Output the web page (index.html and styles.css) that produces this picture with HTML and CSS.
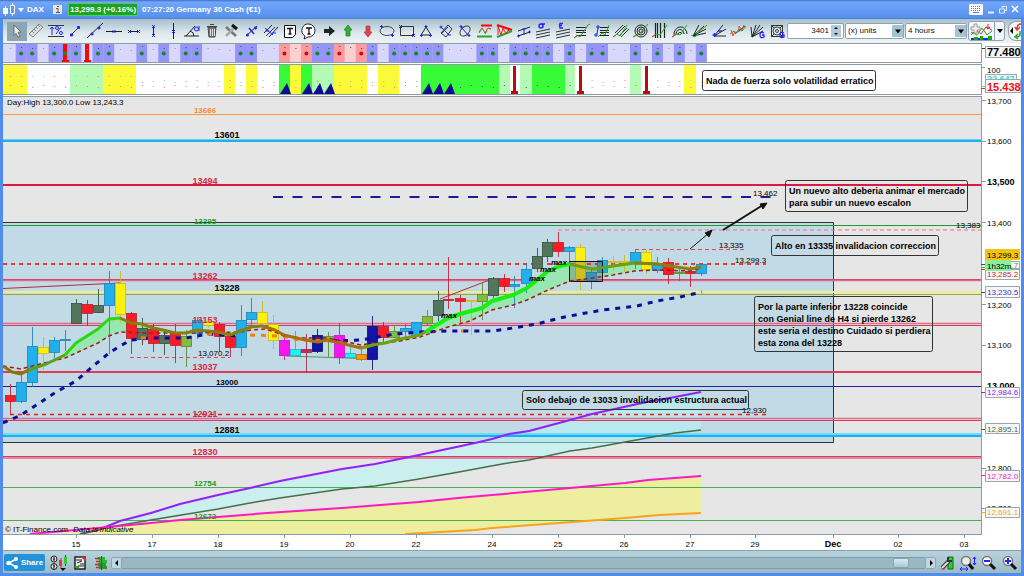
FILE: index.html
```html
<!DOCTYPE html>
<html lang="es">
<head>
<meta charset="utf-8">
<title>DAX - Germany 30 Cash</title>
<link rel="stylesheet" href="styles.css">
</head>
<body>
<div class="window">
<header class="titlebar">
  <svg class="logo" viewBox="0 0 12 14"><path d="M2.500 3v10M9.500 0v13" stroke="#fff"/><path d="M0 5h5v6H0z" fill="#fff"/><path d="M7.500 2.500h4v8h-4z" fill="#5b95ee" stroke="#fff"/></svg>
  <svg class="caret" viewBox="0 0 6 4"><path d="M0 0h6L3 4z" fill="#fff"/></svg>
  <span class="symbol">DAX</span>
  <svg class="info" viewBox="0 0 9 9"><path d="M0 0h9v9H0z" fill="#e6e6e6"/><path d="M3 3.500h2V7M3 7.500h4M4 1.500h2" stroke="#555" fill="none"/></svg>
  <strong class="quote">13,299.3 (+0.16%)</strong>
  <span class="name">07:27:20 Germany 30 Cash (€1)</span>
  <div class="winbtns">
    <button aria-label="Keyboard"><svg width="14" height="11" viewBox="0 0 14 11"><rect width="14" height="11" rx="1" fill="#fff"/><path d="M2 2.500h10M2 4.500h10M2 6.500h10" stroke="#4a80d8" stroke-dasharray="1 1"/><path d="M4 8.500h6" stroke="#4a80d8"/></svg></button>
    <button aria-label="Minimize"><svg width="8" height="9" viewBox="0 0 8 9"><path d="M1 7.500h6" stroke="#e8f0ff" stroke-width="2"/></svg></button>
    <button aria-label="Restore"><svg width="8" height="9" viewBox="0 0 8 9" fill="none" stroke="#e8f0ff"><path d="M3 3V1.500h4.500v4H6M.5 4h5v4h-5z"/></svg></button>
    <button aria-label="Close"><svg width="8" height="9" viewBox="0 0 8 9"><path d="M1 1l6 6M7 1L1 7" stroke="#fff" stroke-width="1.500"/></svg></button>
  </div>
</header>

<div class="toolbar">
  <div class="tools">
    <button class="on" aria-label="Select"><svg viewBox="0 0 18 18"><path d="M6 3l7 7-3 .3 2 4-2 1-2-4-2 2z" fill="#eee" stroke="#555" stroke-width=".8"/></svg></button>
    <button aria-label="Ruler"><svg viewBox="0 0 18 18"><path d="M2 12L12 2l4 3L6 15z" fill="#ddd" stroke="#888"/><path d="M5 9l2 2M7 7l2 2M9 5l2 2M11 3l2 2" stroke="#888"/></svg></button>
    <button aria-label="Percent range"><svg viewBox="0 0 18 18"><path d="M1 3.500h16M1 14.500h16" stroke="#333"/><path d="M5 5v8M3 7l2-2 2 2" stroke="#22f" fill="none"/><path d="M9 12l5-7" stroke="#22f"/><circle cx="10" cy="6" r="1.500" fill="none" stroke="#22f"/><circle cx="14" cy="11" r="1.500" fill="none" stroke="#22f"/></svg></button>
    <button aria-label="Segment"><svg viewBox="0 0 18 18"><path d="M5 13l8-8" stroke="#333"/><path d="M4 13h3M5.500 11.500v3M11 5.500h3M12.500 4v3" stroke="#22f" stroke-width="2"/></svg></button>
    <button aria-label="Line"><svg viewBox="0 0 18 18"><path d="M1 16L17 1" stroke="#222"/><path d="M4.500 12h3M6 10.500v3M11.500 6h3M13 4.500v3" stroke="#22f" stroke-width="1.500"/></svg></button>
    <button aria-label="Horizontal line"><svg viewBox="0 0 18 18"><path d="M1 9.500h16" stroke="#222"/><path d="M7.500 8l3 3M10.500 8l-3 3" stroke="#22f"/></svg></button>
    <button aria-label="Horizontal segment"><svg viewBox="0 0 18 18"><path d="M4 9.500h10" stroke="#222"/><path d="M3 8l3 3M6 8l-3 3M12 8l3 3M15 8l-3 3" stroke="#22f"/></svg></button>
    <button aria-label="Vertical segment"><svg viewBox="0 0 18 18"><path d="M9.500 4v10" stroke="#222"/><path d="M8 3l3 3M11 3L8 6M8 12l3 3M11 12l-3 3" stroke="#22f"/></svg></button>
    <button aria-label="Vertical line"><svg viewBox="0 0 18 18"><path d="M9.500 1v16" stroke="#222"/><path d="M8 8l3 3M11 8l-3 3" stroke="#22f"/></svg></button>
    <button aria-label="Angle"><svg viewBox="0 0 18 18"><path d="M1 14h15M3 14L12 4M7 9q4 1 4 5" stroke="#222" fill="none"/><circle cx="13.500" cy="7" r="2" fill="none" stroke="#22f"/><path d="M16 4v5" stroke="#22f"/></svg></button>
    <button aria-label="Delete"><svg viewBox="0 0 18 18"><path d="M5 5h8l-1 10H6z" fill="#777" stroke="#444"/><path d="M7.500 7v7M9.500 7v7M11.500 7v7" stroke="#ddd"/><path d="M4 4.500h10M7 2.500h4" stroke="#444"/></svg></button>
    <button aria-label="Tools"><svg viewBox="0 0 18 18"><path d="M4 5l10 9" stroke="#777" stroke-width="2.500"/><path d="M4 14l8-8" stroke="#aaa" stroke-width="2.500"/><path d="M10 3l5 4" stroke="#111" stroke-width="3"/></svg></button>
    <button aria-label="Edit line"><svg viewBox="0 0 18 18"><path d="M4 14L15 4" stroke="#222"/><path d="M4 13h3M5.500 11.500v3M12 6h3M13.500 4.500v3M7 6l5 6" stroke="#22f" stroke-width="1.500"/></svg></button>
    <button aria-label="Parallels"><svg viewBox="0 0 18 18"><path d="M3 11l8-8M8 15l9-10" stroke="#222"/><path d="M4 6l8 7M5 14l9-9M4 9h4M11 11h4" stroke="#22f"/></svg></button>
    <button aria-label="Text box"><svg viewBox="0 0 18 18"><path d="M3.500 3.500h11v9l-3 3h-8z" fill="#fff" stroke="#111"/><path d="M6 6.500h6M9 6v6M7.500 12h3" stroke="#111" stroke-width="1.500"/></svg></button>
    <button aria-label="Balloon"><svg viewBox="0 0 18 18"><path d="M9 2a6.500 6.500 0 1 1-1 13l-4 2 1-3A6.500 6.500 0 0 1 9 2z" fill="#fff" stroke="#222"/><path d="M6 6h6M9 6v6M7.500 12h3" stroke="#111" stroke-width="1.300"/></svg></button>
    <button aria-label="Arrow right"><svg viewBox="0 0 18 18"><path d="M4 7h5V4l6 5-6 5v-3H4z" fill="#222"/></svg></button>
    <button aria-label="Arrow up"><svg viewBox="0 0 18 18"><path d="M9 3l4 5h-2v6H7V8H5z" fill="#27b82b" stroke="#357a35" stroke-width=".8"/></svg></button>
    <button aria-label="Arrow down"><svg viewBox="0 0 18 18"><path d="M9 15l4-5h-2V4H7v6H5z" fill="#dd4450" stroke="#a44" stroke-width=".8"/></svg></button>
    <button aria-label="Ellipse"><svg viewBox="0 0 18 18"><ellipse cx="9" cy="9" rx="7" ry="4.500" fill="none" stroke="#444"/><path d="M2 4.500h3M3.500 3v3M13 13.500h3M14.500 12v3" stroke="#22f"/></svg></button>
    <button aria-label="Rectangle"><svg viewBox="0 0 18 18"><path d="M2.500 4.500h13v9h-13z" fill="none" stroke="#333"/><path d="M1 3l3 3M4 3L1 6M14 12l3 3M17 12l-3 3" stroke="#22f"/></svg></button>
    <button aria-label="Triangle"><svg viewBox="0 0 18 18"><path d="M9 5l5 8H4z" fill="none" stroke="#222"/><path d="M7.500 4.500h3M9 3v3M3 13.500h3M4.500 12v3M12 13.500h3M13.500 12v3" stroke="#22f"/></svg></button>
    <button aria-label="Rotated box"><svg viewBox="0 0 18 18"><path d="M11 3l4 4-6 8-5-4z" fill="none" stroke="#333"/><path d="M4 5l8 8M4 12l7-7M2.500 5h3M4 3.500v3M11 13h3" stroke="#22f"/></svg></button>
    <button aria-label="Rotated ellipse"><svg viewBox="0 0 18 18"><ellipse cx="9" cy="9" rx="6" ry="4" fill="none" stroke="#444" transform="rotate(-45 9 9)"/><path d="M5 5l8 9M3.500 4.500h3M5 3v3M11.500 13.500h3M13 12v3" stroke="#22f"/></svg></button>
    <button aria-label="Channel"><svg viewBox="0 0 18 18"><path d="M5 3.500h11" stroke="#f00" stroke-width="2"/><path d="M1 14.500h15" stroke="#2a2" stroke-width="2"/><path d="M3 10l3-4 3 5 3-5 3 1" stroke="#d33" fill="none"/><path d="M3 11l2-3M9 12l2-3" stroke="#2a2"/></svg></button>
    <button aria-label="Wedge"><svg viewBox="0 0 18 18"><path d="M2 3l15 5" stroke="#f00" stroke-width="2"/><path d="M2 15l15-6" stroke="#2a2" stroke-width="2"/><path d="M3 4l3 9 2-7 3 6 2-4 2 2M3 4v9" stroke="#e22" fill="none"/></svg></button>
    <button aria-label="Regression"><svg viewBox="0 0 18 18"><path d="M3 9l12-4M3 14l12-4" stroke="#222"/><path d="M9 6v7M7.500 7h3M2 14h3M3.500 12.500v3M13 10h3M14.500 8.500v3" stroke="#22f"/></svg></button>
    <button aria-label="Standard deviation"><svg viewBox="0 0 18 18"><path d="M2 10l14-3M2 13l14-3M2 16l14-3" stroke="#333"/><circle cx="7" cy="4" r="2" fill="none" stroke="#22f" stroke-width="1.500"/><path d="M7 2h4" stroke="#22f" stroke-width="1.500"/></svg></button>
    <button aria-label="Standard error"><svg viewBox="0 0 18 18"><path d="M2 10l14-3M2 13l14-3M2 16l14-3" stroke="#333"/><path d="M9 1.500H6L5.500 3.500H8M5.500 3.500L6 6h3" stroke="#22f" fill="none" stroke-width="1.300"/></svg></button>
    <button aria-label="Fibonacci retracement"><svg viewBox="0 0 18 18"><path d="M3 5.500h10M3 8.500h10M3 10.500h10M3 13.500h10" stroke="#222"/><path d="M1 16l3-3 3 2 8-12 2-1" stroke="#2a2" fill="none"/><path d="M1 16l3-2M12 5l2 1" stroke="#e33"/></svg></button>
    <button aria-label="Fibonacci extension"><svg viewBox="0 0 18 18"><path d="M7 5.500h9M7 8.500h9M7 10.500h9M7 13.500h9" stroke="#222"/><path d="M5 15l4-4 3 2 4-10" stroke="#2a2" fill="none"/><path d="M1 13h4M3 11v4M3 5h4M5 3v4M4 12l1-6" stroke="#22f"/></svg></button>
    <button aria-label="Fibonacci channel"><svg viewBox="0 0 18 18"><path d="M3 11l8-8M5 12l8-8M7 14l8-8M9 15l8-8" stroke="#333"/><path d="M1 15l4-3 3 2 7-11" stroke="#2a2" fill="none"/><path d="M1 15l3-2" stroke="#e33"/></svg></button>
    <button aria-label="Fibonacci circles"><svg viewBox="0 0 18 18"><g fill="none" stroke="#222"><circle cx="9" cy="9" r="6"/><circle cx="9" cy="9" r="4"/><circle cx="9" cy="9" r="2"/></g><path d="M1 15l4-2 4-3 7-8" stroke="#2a2" fill="none"/><path d="M1 15l3-2" stroke="#e33"/></svg></button>
    <button aria-label="Fibonacci time zones"><svg viewBox="0 0 18 18"><path d="M4.500 1v15M6.500 1v15M9.500 1v15M13.500 1v15" stroke="#222" stroke-width="1.200"/><path d="M1 15l4-3 4 1 7-10" stroke="#2a2" fill="none"/><path d="M1 15l3-2" stroke="#e33"/></svg></button>
    <button aria-label="Fibonacci arcs"><svg viewBox="0 0 18 18"><g fill="none" stroke="#222"><path d="M3 13a6 7 0 0 1 13-1M5 13a4 5 0 0 1 8-1M7 13a2 2 0 0 1 4-1"/></g><path d="M1 15l5-3 3 1 7-10" stroke="#2a2" fill="none"/><path d="M1 15l3-2" stroke="#e33"/></svg></button>
    <button aria-label="Fibonacci fan"><svg viewBox="0 0 18 18"><path d="M3 14L9 3M3 14L14 4M3 14l13-7M3 14l13-3" stroke="#222"/><path d="M1 13l4 2 4-5 8-7" stroke="#2a2" fill="none"/></svg></button>
    <button aria-label="Speed lines"><svg viewBox="0 0 18 18"><path d="M4 14L13 3M4 14l12-7M4 14h12" stroke="#222"/><path d="M2.500 13h4M4.500 11v4M8 9h4" stroke="#22f" stroke-width="1.500"/></svg></button>
    <button aria-label="Wave"><svg viewBox="0 0 18 18"><path d="M1 12l4-3 2 2 3-4 3 2 4-5" stroke="#2a2" fill="none"/><path d="M2 8l2 6 2-5M10 10V4l3 4 2-5" stroke="#e43" fill="none"/><path d="M6 12l10-8" stroke="#555"/></svg></button>
    <button aria-label="Gann fan"><svg viewBox="0 0 18 18"><path d="M3 15L2 5M3 15L7 3M3 15l8-12M3 15L14 5M3 15l11-6" stroke="#222"/><path d="M15 11q-4-2-4 2t4 2v-2h-2" stroke="#22f" fill="none" stroke-width="1.300"/></svg></button>
    <button aria-label="Gann square"><svg viewBox="0 0 18 18"><path d="M3.500 3.500h11v11h-11zM3 3l12 12M15 3L3 15" fill="none" stroke="#333"/><circle cx="9" cy="9" r="4" fill="#dfe9ee" stroke="#444"/><circle cx="9" cy="9" r="1.500" fill="none" stroke="#444"/><path d="M16 11q-4-2-4 2t4 2v-2h-2" stroke="#22f" fill="none" stroke-width="1.300"/></svg></button>
  </div>
  <div class="field spin"><input type="text" value="3401" aria-label="Number of units"><span class="steps"><button aria-label="More"><svg viewBox="0 0 6 4"><path d="M1 3l2-2 2 2z"/></svg></button><button aria-label="Less"><svg viewBox="0 0 6 4"><path d="M1 1l2 2 2-2z"/></svg></button></span></div>
  <div class="field units"><select aria-label="Unit type"><option>(x) units</option></select><svg class="drop" viewBox="0 0 11 11"><path d="M3 4h6L6 8z"/></svg></div>
  <div class="field frame"><select aria-label="Time frame"><option>4 hours</option></select><svg class="drop" viewBox="0 0 11 11"><path d="M3 4h6L6 8z"/></svg></div>
  <div class="split">
    <button aria-label="Indicators"><svg width="23" height="17" viewBox="0 0 23 17"><path d="M1 12l5-5 5 4 5-7 6 3" stroke="#d33" fill="none"/><path d="M1 9l6 3 5-7 5 7 5-4" stroke="#2a2" fill="none"/><path d="M1 16h4M8 16h3M13 16h5" stroke="#22f" stroke-width="2"/><path d="M4 14h4v3H4zM10 13h3v4h-3zM18 13h4v4h-4z" fill="#1a1"/><path d="M4 1h3v3h3v3H7v3H4V7H1V4h3z" fill="#eee" stroke="#888" stroke-width=".8"/><path d="M18 1v5M16 4l2 2 2-2" stroke="#d22" fill="none"/></svg></button>
    <button class="more" aria-label="More indicators"><svg width="6" height="4" viewBox="0 0 6 4"><path d="M0 0h6L3 4z"/></svg></button>
  </div>
  <button class="swap" aria-label="Swap"><svg width="12" height="18" viewBox="0 0 12 18"><path d="M4 5v7L1 9z"/><path d="M12 2Q8 2 8 7M6 5l2 3 3-3" stroke="#e33" fill="none" stroke-width="1.500"/><path d="M11 9v3q0 3-4 3M9 12l-3 3 3 2" stroke="#2a2" fill="none" stroke-width="1.500"/></svg></button>
</div>

<main class="charts">
<svg class="strip1" viewBox="3 43 1018 21" preserveAspectRatio="none" role="img" aria-label="Trend strip">
  <path d="M3 43h1018v21H3z" fill="#fff"/>
  <g id="trend"></g>
  <path d="M3 43.500h978.500M981.500 43v20M3 62.500h979" class="edge"/>
  <path d="M982 48.500h4" stroke="#333"/>
  <path d="M985.500 46.500h35v11h-35z" class="tag"/>
  <text x="987" y="56" class="t11 b">77.480</text>
</svg>
<svg class="strip2" viewBox="3 64 1018 32" preserveAspectRatio="none" role="img" aria-label="Force strip">
  <path d="M3 64h1018v32H3z" fill="#fff"/>
  <g id="force"></g>
  <path d="M3 64.500h978.500M981.500 64v30M3 94.500h979" class="edge"/>
  <rect x="702.500" y="70.500" width="173" height="20" rx="2" fill="#fff" stroke="#333"/>
  <text x="706" y="84" class="t9 b">Nada de fuerza solo volatilidad erratico</text>
  <path d="M982 67.500h3" class="edge"/>
  <text x="987" y="73" class="t8">100</text>
  <path d="M985.500 74.500h31v8h-31z" class="tag"/>
  <text x="987" y="82" class="t9 b" fill="#3dd">22.647</text>
  <path d="M981 86.500h4" stroke="#3dd"/><path d="M981 88.500h4" stroke="#f22"/>
  <path d="M985.500 79.500h35v13h-35z" class="tag"/>
  <text x="987" y="91" class="t11 b" fill="#f01018">15.438</text>
</svg>
<svg class="price" viewBox="3 96 1018 454" preserveAspectRatio="none" role="img" aria-label="Price chart">
  <path d="M3 96h1018v454H3z" fill="#fff"/>
  <path d="M3 96h979v439H3z" fill="#e6e6e6"/>
  <path d="M3 222.500h830.500v220H3" fill="#c2dae6" stroke="#333"/>

  <path d="M85 534L98 530 120 521 151 513 180 504 218 495 250 488 280 481 342 469 375 464 419 455 475 443 492 439 509 434 529 431 559 423 592 414 642 403 675 397 701 392V430L675 433 625 442 592 448 570 451 529 460 502 464 459 472 419 479 375 486 342 489 280 498 250 503 218 509 151 520 110 527 80 534z" fill="#b0f5f5" opacity=".5"/>
  <path d="M140 524L180 520 218 517 267 513 342 508 419 502 458 498 492 495 559 489 625 483 648 480 701 476V513L659 515 625 518 572 522 559 523 492 528 475 530 440 532 405 534H60z" fill="#eeeea0"/>

  <g fill="none">
    <path d="M3 114.500h978" stroke="#ff9a3c"/>
    <path d="M3 139.500h978" stroke="#6cd0f4" stroke-width="1"/><path d="M3 141h978" stroke="#18b4ea" stroke-width="2"/>
    <path d="M3 185h978" stroke="#d81b45" stroke-width="2"/>
    <path d="M273 197h498" stroke="#1a1a9c" stroke-width="2" stroke-dasharray="10 9.500"/>
    <path d="M3 225.500h978" stroke="#209a38"/>
    <path d="M558 230h423" stroke="#f07078" stroke-dasharray="4 3"/>
    <path d="M635 249.500h110" stroke="#e44" stroke-dasharray="4 3"/>
    <path d="M3 264h763" stroke="#f33" stroke-width="2" stroke-dasharray="4 4"/>
    <path d="M3 279.500h978M3 325.500h978M3 420.500h978M3 456.500h978" stroke="#d9395f" stroke-width="1"/>
    <path d="M3 280.500h978M3 323.500h978M3 418.500h978M3 458h978" stroke="#dd6c8a" stroke-width="1.500"/>
    <path d="M3 292h978" stroke="#eef080" stroke-width="2"/><path d="M3 294.500h978" stroke="#a2a440"/>
    <path d="M130 357.500h100" stroke="#e44" stroke-dasharray="4 3"/>
    <path d="M3 372h978" stroke="#dd3a5c" stroke-width="2"/>
    <path d="M3 386.500h978" stroke="#2222a4"/>
    <path d="M10 414.500h756" stroke="#f01818" stroke-width="1.500" stroke-dasharray="4 4"/>
    <path d="M3 434h978" stroke="#74d8fa" stroke-width="2"/><path d="M3 436h978" stroke="#10b4f4" stroke-width="2"/>
    <path d="M3 487.500h978M3 520.500h978" stroke="#4cae52"/>
    <path d="M3 288.500L120 283M440 299L492 279" stroke="#b22c3c"/>
    <path d="M286 356L361 358.500" stroke="#4a9a50"/>
  </g>

  <g fill="none" stroke-width="2">
    <path d="M80 534L98 530 120 521 151 513 180 504 218 495 250 488 280 481 342 469 375 464 419 455 475 443 492 439 509 434 529 431 559 423 592 414 642 403 675 397 701 392" stroke="#9420f8"/>
    <path d="M80 534L110 527 151 520 218 509 250 503 280 498 342 489 375 486 419 479 459 472 502 464 529 460 570 451 592 448 625 442 675 433 701 430" stroke="#447048" stroke-width="1.500"/>
    <path d="M30 534L98 528 151 523 180 520 218 517 267 513 342 508 419 502 458 498 492 495 559 489 625 483 648 480 701 476" stroke="#fa1cc0"/>
    <path d="M405 534L440 532 475 530 492 528 559 523 572 522 625 518 659 515 701 513" stroke="#f8a418"/>
  </g>

  <g fill="#98e6b0">
    <path d="M65 355L76 343 98 329 109 319 120 318 131 323 142 324 153 328 175 333 131 332 120 332 109 336 98 343 65 358z"/>
    <path d="M425 334L430 329 448 318 460 314 482 308 492 301 513 295 527 288 537 280 548 271 560 266 570 264 582 267 593 269 613 266 635 263 656 264 670 266 680 270 635 271 613 275 593 278 570 281 548 290 527 300 513 305 492 310 470 321 448 327z"/>
  </g>
  <g id="candles"></g>
  <path d="M569.500 261.500h33v20h-33z" fill="#555" fill-opacity=".3" stroke="#111"/>

  <g fill="none" stroke-width="3" stroke-dasharray="5 6">
    <path d="M3 423L21 415 38 404 56 392 76 381 92 367 109 353 120 346 131 340 151 338 186 338 208 334 240 336" stroke="#0d0d94"/>
    <path d="M141 338h6M207 334h8M250 335L280 336 300 340 332 341M461 331h5" stroke="#f88010"/>
    <path d="M332 341L361 340 373 338 395 334 420 332 448 331 493 331 513 328 537 324 560 318 580 314 603 310 637 306 657 301 680 297 702 292" stroke="#0d0d94"/>
  </g>
  <path d="M3 366L21 369 32 366 65 358 98 343 109 336 120 332 150 333 197 333 240 332 251 330 265 329 275 332 284 336 300 338 327 338 361 345 373 343 385 343 400 341 420 337 448 327 470 321 492 310 513 305 527 300 548 290 570 281 593 278 613 275 635 271 656 270 690 271 701 268" fill="none" stroke="#a01c1c" stroke-width="1.500" stroke-dasharray="4 3"/>
  <g fill="none" stroke-width="3" stroke-linejoin="round">
    <path d="M3 366L12 372 21 374 32 368" stroke="#8a7410"/>
    <path d="M29 370L46 364 65 355" stroke="#58a410"/>
    <path d="M65 355L76 343 98 329 109 319 120 318" stroke="#28d810"/>
    <path d="M120 318L131 323 142 324 153 328 163 330 175 333 186 333 197 330 208 331 218 332 230 335 240 331 251 327 262 326" stroke="#84800c"/>
    <path d="M262 326L275 330 284 335 305 340 318 342 327 340 340 343 361 348 373 345" stroke="#a8700c"/>
    <path d="M361 348L373 345 385 343 400 339 420 335 430 329" stroke="#70a010"/>
    <path d="M426 332L430 329 448 318 460 314 482 308 492 301 513 295 527 288 537 280 548 271 560 266 570 264" stroke="#18f010" stroke-width="4"/>
    <path d="M570 264L582 267 593 269 613 266 635 263 657 264" stroke="#6ba010"/>
    <path d="M635 263L657 264 670 266 690 269 701 267" stroke="#8a8010"/>
  </g>
  <g stroke="#111" fill="#111">
    <path d="M690 249L709 233"/><path d="M712 230l-3 7-4-4z"/>
    <path d="M723 230L763 205" stroke-width="2"/><path d="M767 203l-4 6-3-5z"/>
  </g>

  <g class="t8" font-style="italic" font-weight="bold"><text x="441" y="318">max</text><text x="529" y="281">max</text><text x="540" y="272">max</text><text x="551" y="265">max</text></g>
  <g class="t8 b mid"><text x="205" y="113" fill="#f58a30">13666</text><text x="205" y="224" fill="#239a2c">13395</text><text x="205" y="486" fill="#239a2c">12754</text><text x="205" y="519" fill="#239a2c">12672</text><text x="227" y="385">13000</text></g>
  <g class="t9 b mid"><text x="227" y="138">13601</text><text x="227" y="291">13228</text><text x="227" y="433">12881</text></g>
  <g class="t9 b mid red"><text x="205" y="184">13494</text><text x="205" y="279">13262</text><text x="205" y="323">13153</text><text x="205" y="370">13037</text><text x="205" y="417">12921</text><text x="205" y="455">12830</text></g>
  <g class="t8"><text x="7" y="105">Day:High 13,300.0 Low 13,243.3</text><text x="753" y="196">13,462</text><text x="956" y="228">13,383</text><text x="719" y="248">13,335</text><text x="735" y="263">13,299.3</text><text x="198" y="356">13,070.2</text><text x="742" y="413">12,930</text><text x="5" y="532">© IT-Finance.com</text><text x="73" y="532" font-style="italic">Data is indicative</text></g>

  <g fill="none" stroke="#333">
    <rect x="785.500" y="180.500" width="182" height="31" rx="2"/><rect x="771.500" y="235.500" width="167" height="20" rx="2"/><rect x="754.500" y="296.500" width="178" height="55" rx="2"/><rect x="522.500" y="390.500" width="226" height="19" rx="2"/>
  </g>
  <g class="t9 b">
    <text x="789" y="194">Un nuevo alto deberia animar el mercado</text><text x="789" y="206">para subir un nuevo escalon</text>
    <text x="775" y="249">Alto en 13335 invalidacion correccion</text>
    <text x="758" y="310">Por la parte inferior 13228 coincide</text><text x="758" y="322">con Genial line de H4 si pierde 13262</text><text x="758" y="334">este seria el destino Cuidado si perdiera</text><text x="758" y="346">esta zona del 13228</text>
    <text x="526" y="403">Solo debajo de 13033 invalidacion estructura actual</text>
  </g>

  <path d="M3 96.500h979M981.500 96v439M3 534.500h979" class="edge"/>
  <path d="M982 100.500h4M982 141.500h4M982 181.500h4M982 222.500h4M982 304.500h4M982 345.500h4M982 468.500h4M982 508.500h4M76.500 535v3M152.500 535v3M218.500 535v3M284.500 535v3M350.500 535v3M416.500 535v3M492.500 535v3M558.500 535v3M624.500 535v3M690.500 535v3M755.500 535v3M833.500 535v3M898.500 535v3M964.500 535v3" class="edge"/>
  <g class="t8"><text x="987" y="104">13,700</text><text x="987" y="144">13,600</text><text x="987" y="226">13,400</text><text x="987" y="308">13,200</text><text x="987" y="348">13,100</text><text x="987" y="471">12,800</text><text x="987" y="511">12,700</text></g>
  <g class="t9 b"><text x="987" y="185">13,500</text><text x="987" y="389">13,000</text></g>
  <path d="M985.500 268.500h34v11h-34zM985.500 286.500h34v11h-34zM985.500 387.500h34v10h-34zM985.500 423.500h34v10h-34zM985.500 470.500h34v11h-34zM985.500 507.500h34v10h-34zM985.500 261.500h34v8h-34z" class="tag"/>
  <path d="M985 249h35v11h-35z" fill="#f2c40c"/>
  <path d="M981 392.500h4" stroke="#9420f8"/><path d="M981 475.500h4" stroke="#fa1cc0"/><path d="M981 512.500h4" stroke="#f8a418"/><path d="M981 292.500h4M981 264.500h4" stroke="#447"/><path d="M981 269.500h4" stroke="#c33"/><path d="M981 267.500h4" stroke="#4a4"/><path d="M981 429.500h4" stroke="#447048"/>
  <g class="t8">
    <text x="987" y="258">13,299.3</text><text x="987" y="268" fill="#6a9a20">13,291.7</text><text x="987" y="277" fill="#b83040">13,285.2</text><text x="987" y="295" fill="#4038b0">13,230.5</text>
    <text x="987" y="395" fill="#9420f8">12,984.6</text><text x="987" y="432" fill="#447048">12,895.1</text><text x="987" y="479" fill="#f028c0">12,782.0</text><text x="987" y="515" fill="#f8a418">12,691.1</text>
  </g>
  <path d="M985 260h26v11h-26z" fill="#8cee98"/><text x="987" y="269" class="t8">1h32m</text>
  <g class="t8 mid"><text x="76" y="547">15</text><text x="152" y="547">17</text><text x="218" y="547">18</text><text x="284" y="547">19</text><text x="350" y="547">20</text><text x="416" y="547">22</text><text x="492" y="547">24</text><text x="558" y="547">25</text><text x="624" y="547">26</text><text x="690" y="547">27</text><text x="755" y="547">29</text><text x="898" y="547">02</text><text x="964" y="547">03</text></g>
  <text x="833" y="547" class="t9 b mid">Dec</text>
</svg>
</main>

<footer class="bottombar">
  <button class="share"><svg width="12" height="12" viewBox="0 0 12 12"><path d="M10 2L3 6l7 4" stroke="#fff" fill="none" stroke-width="1.500"/><g fill="#fff"><circle cx="10" cy="2" r="2"/><circle cx="2.500" cy="6" r="2.300"/><circle cx="10" cy="10" r="2"/></g></svg>Share</button>
  <button class="ico" aria-label="Chart style"><svg viewBox="0 0 18 16"><circle cx="4" cy="4" r="3" fill="#ddd" stroke="#222"/><circle cx="4" cy="11.500" r="3" fill="#ddd" stroke="#222"/><path d="M3 4h2M4 2v4M3 11h2M4 9v5" stroke="#222"/><path d="M11 3v10" stroke="#d22"/><path d="M9 5h3v6H9z" fill="#e33"/><path d="M15.500 0v11" stroke="#161"/><path d="M14 2h3v7h-3z" fill="#3c3"/><path d="M10 13h6l-3 3z" fill="#111"/></svg></button>
  <button class="ico" aria-label="Lists"><svg viewBox="0 0 18 16"><path d="M4 2h10v12H4z" fill="#eee" stroke="#222" stroke-width="1.500"/><path d="M5 5h6M6 8l5-2M7 11h6M9 9h4" stroke="#222"/><path d="M11 2l4 3" stroke="#e33" stroke-width="2"/><path d="M4 12h4" stroke="#2a2" stroke-width="2"/></svg></button>
  <button class="ico" aria-label="Order book"><svg viewBox="0 0 18 16"><path d="M6 2h7v3H6zM7 5h8v3H7z" fill="#2eb83a"/><path d="M6 8h8v3H6zM7 11h8v3H7z" fill="#2a9a30"/><path d="M3 3.500h5M4 6.500h4M3 9.500h5M4 12.500h4" stroke="#b33" stroke-width="1.500"/><path d="M9.500 1v14" stroke="#262"/></svg></button>
  <button class="arrow" aria-label="Scroll left"><svg viewBox="0 0 10 10"><path d="M6 2v6L3 5z"/></svg></button>
  <div class="track"><span class="thumb"></span></div>
  <button class="arrow" aria-label="Scroll right"><svg viewBox="0 0 10 10"><path d="M4 2v6l3-3z"/></svg></button>
  <div class="view">
    <button class="ico" aria-label="Settings"><svg viewBox="0 0 18 16"><path d="M10 2h5v12h-5z" fill="#3c3" stroke="#161"/><path d="M4 13l7-7" stroke="#333" stroke-width="4"/><path d="M4 13l7-7" stroke="#ddd" stroke-width="2"/><path d="M10 2v4h4" stroke="#333" fill="none" stroke-width="2"/><path d="M3 14h4" stroke="#c33"/></svg></button>
    <button class="ico" aria-label="Fit"><svg viewBox="0 0 18 16"><circle cx="7" cy="6" r="4.500" fill="#eee" stroke="#777" stroke-width="1.500"/><path d="M10 9l4 5" stroke="#111" stroke-width="3"/><path d="M15.500 2v8M14 4l1.500-2L17 4M14 8l1.500 2L17 8M1 14h8M3 12l-2 2 2 2M7 12l2 2-2 2" stroke="#22f" fill="none"/></svg></button>
    <button class="ico" aria-label="Zoom out"><svg viewBox="0 0 18 16"><circle cx="7" cy="6" r="4.500" fill="#fff" stroke="#777" stroke-width="1.500"/><path d="M10 9l5 5" stroke="#111" stroke-width="3"/><path d="M4 6h6" stroke="#22f" stroke-width="2"/></svg></button>
    <button class="ico" aria-label="Zoom in"><svg viewBox="0 0 18 16"><circle cx="7" cy="6" r="4.500" fill="#fff" stroke="#777" stroke-width="1.500"/><path d="M10 9l5 5" stroke="#111" stroke-width="3"/><path d="M4 6h6M7 3v6" stroke="#22f" stroke-width="2"/></svg></button>
  </div>
</footer>
</div>
<script src="chart.js"></script>
</body>
</html>
```

FILE: styles.css
```css
* { box-sizing: border-box; }
body { margin: 0; font: 8px/12px "Liberation Sans", Arial, sans-serif; color: #111; }
button { border: 0; margin: 0; padding: 0; background: none; font: inherit; color: inherit; display: flex; align-items: center; justify-content: center; }
svg { display: block; }
.window { display: flex; flex-direction: column; height: 100vh; border: solid #4f8cec; border-width: 0 3px 3px; }

.titlebar { display: flex; align-items: center; height: 19px; flex: none; margin: 0 -3px; padding: 1px 5px 0 3px; background: linear-gradient(#3e70c8 0, #72a6fc 2px, #5590ec); color: #fff; font-weight: bold; border-bottom: 1px solid #4a80d8; }
.logo { width: 12px; height: 14px; }
.caret { width: 6px; height: 4px; margin: 0 3px; }
.symbol { width: 26px; }
.info { width: 9px; height: 9px; margin-right: 6px; }
.quote { background: #18a428; border: 1px solid #58c860; padding: 0 1px; line-height: 11px; }
.name { margin-left: 4px; }
.winbtns { display: flex; gap: 4px; margin-left: auto; }

.toolbar { display: flex; align-items: center; height: 24px; flex: none; padding-left: 4px; background: linear-gradient(#a6c0cc, #dfe9ee 60%, #eef3f5); overflow: hidden; }
.tools { flex: 1; min-width: 0; display: grid; grid-template-columns: repeat(40, minmax(0, 1fr)); }
.tools button { height: 19px; }
.tools svg { width: 18px; height: 18px; flex: none; fill: none; }
.tools .on { background: #8ba5b2; }
.field { display: flex; align-items: center; height: 16px; margin-right: 1px; background: #fff; border: 1px solid #8fa3ae; border-radius: 2px; }
.field input, .field select { flex: 1; min-width: 0; width: 100%; border: 0; padding: 0 2px; background: none; font: inherit; color: inherit; appearance: none; outline: 0; }
.spin { width: 57px; }
.spin input { text-align: right; }
.steps { display: flex; flex-direction: column; width: 10px; background: #b4ccd8; margin-right: 2px; }
.steps svg { width: 6px; height: 6px; }
.units { width: 59px; }
.frame { width: 62px; }
.drop { width: 11px; height: 12px; background: #a5c3d0; flex: none; }
.split { display: flex; height: 20px; border: 1px solid #8fa3ae; border-radius: 3px; background: #f2f6f8; width: 37px; margin-right: 3px; }
.split button { flex: 1; }
.split .more { flex: none; width: 10px; border-left: 1px solid #8fa3ae; }
.swap { width: 13px; height: 20px; border: 1px solid #8fa3ae; border-right: 0; border-radius: 8px 0 0 8px; background: #f8fafb; }

.charts { flex: 1; min-height: 0; display: flex; flex-direction: column; background: #fff; }
.charts svg { width: 100%; flex: none; }
.strip1 { height: 21px; }
.strip2 { height: 32px; }
.charts .price { flex: 1; min-height: 0; }
.edge { fill: none; stroke: #8a9ca4; }
.tag { fill: #f6f8f8; stroke: #9aa8ac; }
.wick { opacity: 0.85; }
.t8 { font-size: 8px; }
.t9 { font-size: 9px; }
.t11 { font-size: 11px; }
.b { font-weight: bold; }
.mid { text-anchor: middle; }
.red { fill: #d82848; }

.bottombar { display: flex; align-items: center; height: 23px; flex: none; padding: 1px 1px 0; background: linear-gradient(#b8d2dc, #9cbac6); border-top: 1px solid #8aa0aa; }
.share { width: 41px; height: 17px; gap: 3px; margin-right: 3px; border-radius: 2px; background: #2491d8; color: #fff; font-weight: bold; }
.ico { width: 21px; height: 18px; }
.ico svg { width: 18px; height: 16px; }
.arrow { width: 11px; height: 12px; background: #bdd8e2; border: 1px solid #8aa8b4; border-radius: 2px; }
.arrow svg { width: 10px; height: 10px; flex: none; }
.track { flex: 1; height: 12px; display: flex; justify-content: flex-end; padding-right: 16px; background: #9ab8c4; border: solid #7f9ca8; border-width: 1px 0; }
.thumb { width: 16px; background: linear-gradient(#d8ecf2, #a8c8d4); border: 1px solid #86a6b2; border-radius: 2px; }
.view { display: flex; }
```

FILE: chart.js
```js
const NS = 'http://www.w3.org/2000/svg';
function add(parent, tag, attrs) {
  const el = document.createElementNS(NS, tag);
  for (const k in attrs) el.setAttribute(k, attrs[k]);
  parent.appendChild(el);
}
const START = 4.7, STEP = 10.97, CELLS = 64;

// Trend strip: b rising, l neutral, p falling, q weak falling
const trend = document.getElementById('trend');
const states = Array(CELLS).fill('l');
[1,2,4,5,6,8,9,12,14,16,17,21,22,28,29,33,35,36,37,38,39,43,44,46,47,48,49,51,53,54,57,59,61,63].forEach(k => { states[k] = 'b'; });
[25, 27, 30, 32].forEach(k => { states[k] = 'p'; });
[26, 31].forEach(k => { states[k] = 'q'; });
const shade = { b: '#9494fa', l: '#d8d8fc', p: '#fa9c9c', q: '#fcd0d0' };
add(trend, 'rect', { x: 3, y: 43, width: 703, height: 20, fill: shade.l });
states.forEach((s, k) => {
  add(trend, 'rect', { x: START + k * STEP, y: 43, width: STEP + 0.1, height: 20, fill: shade[s] });
});
[65, 87].forEach(x => add(trend, 'path', { d: `M${x - 2} 43h4v17h2v2h-7v-2h1z`, fill: '#fa0808' }));
states.forEach((s, k) => {
  const x = START + (k + 0.5) * STEP;
  if (s === 'b' || s === 'p') add(trend, 'circle', { cx: x, cy: 53.5, r: 2, fill: s === 'b' ? '#108a20' : '#c80c14' });
  add(trend, 'rect', { x, y: s === 'l' ? 48 + k % 3 : 46 + k % 3, width: 1, height: 1, fill: s === 'l' ? '#e07080' : '#444' });
});

// Force strip
const force = document.getElementById('force');
const Y = '#fcfa38', G = '#38fa38', P = '#b4fab4';
[[3, 27, Y], [70, 103, P], [103, 136, Y], [224, 235, Y], [246, 257, Y], [279, 290, G], [290, 301, Y], [301, 312, G],
 [312, 334, P], [334, 367, Y], [378, 399, Y], [421, 499, G], [499, 510, P], [520, 532, P], [532, 565, G],
 [565, 575, P], [630, 641, P], [684, 696, Y]].forEach(([a, b, fill]) =>
  add(force, 'rect', { x: a, y: 65, width: b - a, height: 29, fill }));
for (let k = 0; k < CELLS; k++) {
  const x = START + (k + 0.5) * STEP;
  add(force, 'rect', { x, y: k < 12 ? 76 : 82 - k % 3, width: 1, height: 1, fill: k % 4 ? '#70dcd0' : '#e88050' });
  add(force, 'rect', { x, y: 85 + k % 3, width: 1, height: 1, fill: k > 38 && k < 52 ? '#286828' : '#f07878' });
}
[280, 302, 313, 324, 422, 433, 444].forEach(x => add(force, 'path', { d: `M${x} 94l7-11 4 11z`, fill: '#0c0c90' }));
[514, 580, 646].forEach(x => add(force, 'path', { d: `M${x - 1} 66h3v25h2v3h-7v-3h2z`, fill: '#b80c0c' }));

// Candles: x, body top, body bottom, high, low, colour
const col = { r: '#fa1c24', u: '#22b0ec', y: '#fcf010', d: '#54755c', g: '#84bc40', m: '#fa14f0', c: '#20f0f4', k: '#c82860', n: '#1414a4', o: '#fa9410' };
const rim = { r: '#c01c2c', u: '#1c84b4', y: '#ccbc10', d: '#344e3a', g: '#588a28', m: '#c414c0', c: '#20b4c0', k: '#a02448', n: '#0c0c70', o: '#b87010' };
const candles = document.getElementById('candles');
[[10,395,401,384,415,'r'],[21,382,401,373,403,'u'],[32,346,382,327,387,'u'],[43,347,353,337,370,'y'],[54,340,352,337,358,'u'],
 [65,339,340,330,351,'u'],[76,303,323,299,323,'d'],[87,304,313,300,326,'r'],[98,305,312,289,313,'d'],[109,283,305,271,354,'u'],
 [120,283,314,271,323,'y'],[131,313,338,312,354,'r'],[142,328,339,318,345,'d'],[153,329,343,324,352,'r'],[164,335,343,330,355,'d'],
 [175,333,345,324,363,'r'],[186,336,346,330,367,'g'],[197,320,333,317,339,'u'],[208,321,325,318,328,'y'],[219,324,336,322,352,'r'],
 [230,336,347,334,357,'r'],[241,320,347,305,356,'u'],[251,312,319,298,328,'u'],[262,312,323,301,324,'y'],[273,324,340,315,349,'y'],
 [284,340,355,338,360,'m'],[295,349,355,331,356,'c'],[306,349,352,334,373,'k'],[317,335,351,329,353,'n'],[328,336,340,332,357,'g'],
 [339,335,357,323,364,'m'],[350,353,357,347,358,'c'],[361,354,359,346,361,'o'],[372,326,359,316,370,'n'],[383,326,337,322,344,'r'],
 [394,331,337,325,338,'g'],[405,328,331,324,340,'u'],[416,322,335,322,336,'u'],[427,316,323,310,325,'g'],[438,300,315,291,321,'d'],
 [448,299,300,257,309,'r'],[460,298,301,295,323,'r'],[471,300,301,300,335,'y'],[482,294,301,282,320,'g'],[493,278,295,277,298,'d'],
 [504,278,286,274,292,'r'],[514,284,286,276,308,'u'],[526,269,283,264,293,'u'],[537,256,268,248,272,'d'],[547,242,256,239,262,'d'],
 [558,242,251,232,257,'r'],[569,247,251,246,266,'u'],[580,247,279,244,290,'y'],[591,272,280,268,289,'u'],[602,260,272,257,275,'u'],
 [613,261,262,256,271,'y'],[624,261,262,255,272,'y'],[635,252,262,250,269,'u'],[646,252,269,250,274,'y'],[657,264,270,257,273,'u'],
 [668,262,274,258,284,'r'],[679,272,273,266,281,'g'],[690,271,273,266,287,'r'],[701,264,273,263,276,'u']
].forEach(([x, t, b, h, l, c]) => {
  add(candles, 'path', { class: 'wick', d: `M${x + 0.5} ${h}V${l}`, stroke: rim[c] });
  add(candles, 'rect', { x: x - 4.5, y: t + 0.5, width: 10, height: b - t, fill: col[c], stroke: rim[c], 'stroke-width': 0.8 });
});
```
